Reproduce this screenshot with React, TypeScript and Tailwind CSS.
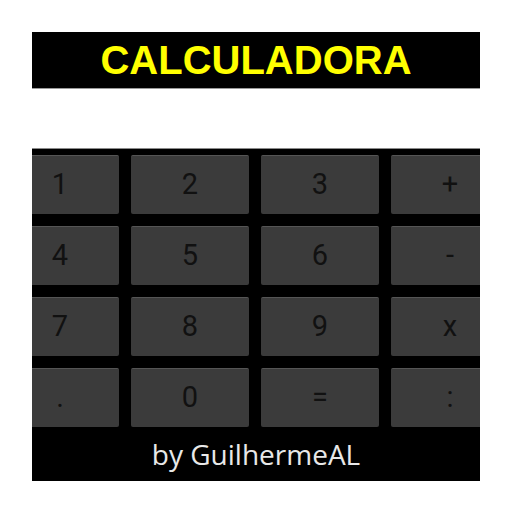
const keys = ["1", "2", "3", "+", "4", "5", "6", "-", "7", "8", "9", "x", ".", "0", "=", ":"]

function Key({ label }: { label: string }) {
  return (
    <div className="h-[59px] flex items-center justify-center rounded-[2px] bg-[#3b3b3b] border-t border-[#555555] text-[29px] text-[#111111] font-['Roboto',sans-serif] font-normal">
      {label}
    </div>
  )
}

export default function App() {
  return (
    <div className="w-[512px] h-[512px] bg-white px-8 pt-8">
      {/* Title bar */}
      <div className="h-[57px] bg-black border-b border-[#9a9a9a] flex items-center justify-center">
        <h1 className="text-[40px] leading-none font-bold text-[#ffff00] font-['Liberation_Sans',Arial,sans-serif]">
          CALCULADORA
        </h1>
      </div>

      <div className="h-[59px]" />

      {/* Keypad */}
      <div className="bg-black border-t border-[#8a8a8a] overflow-hidden">
        <div className="-ml-[31px] w-[508px] pt-[6px] grid grid-cols-4 gap-x-[12px] gap-y-[12px]">
          {keys.map((k) => (
            <Key key={k} label={k} />
          ))}
        </div>
        <div className="h-[54px] flex items-center justify-center text-[28px] text-[#e8e8e8] font-['Open_Sans',sans-serif]">
          by GuilhermeAL
        </div>
      </div>
    </div>
  )
}
